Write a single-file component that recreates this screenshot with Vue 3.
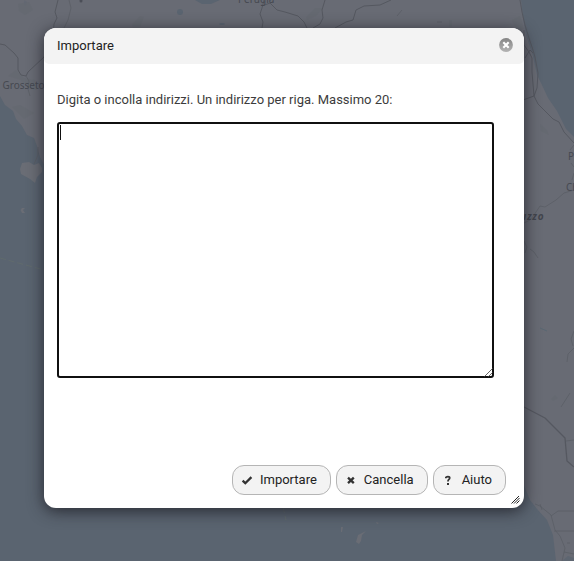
<script setup>
import { ref } from 'vue'

const addresses = ref('')
const buttons = [
  { id: 'import', label: 'Importare' },
  { id: 'cancel', label: 'Cancella' },
  { id: 'help', label: 'Aiuto' },
]
</script>

<template>
  <main class="screen">
    <svg class="map" viewBox="0 0 574 561" width="574" height="561" aria-hidden="true">
      <rect width="574" height="561" fill="#686b74" />
      <g class="water">
        <path d="M0 96 L5 105 L13 111 L16 119 L22 126 L27 135 L34 138 L37 146 L40 157 L46 168 L70 220 L170 330 L330 430 L523 483 L530 500 L537 509 L547 520 L553 535 L556 561 H0Z" />
        <path d="M521 0 H574 V137 L566 129 L557 111 L548 98 L541 83 L537 75 L533 56 L526 35 L523 18Z" />
        <path d="M195 0 L202 4 L211 4 L220 0Z" />
        <ellipse cx="180" cy="12" rx="3" ry="3" />
        <ellipse cx="222" cy="24" rx="3" ry="1" />
        <path d="M24 0 L27 2 L26 6 L24 5Z" opacity=".3" />
        <path d="M562 561 L568 556 L574 558 V561Z" opacity=".7" />
        <path d="M540 328 L547 331" class="stream" />
      </g>
      <g class="land">
        <path d="M22 163 L29 162 L34 165 L39 163 L42 168 L42 172 L37 177 L35 183 L30 179 L21 174 L20 169Z" />
        <path d="M22 208 L25 208 L23 210 L25 213 L22 213 L20.500 210Z" />
        <path d="M356 542 L358 535 L366 531 L362 535 L361 541 L359 544Z" />
        <path d="M341 527 h2 l-1 5 h-1Z M376 522 l3 1 -2 1Z" />
      </g>
      <g class="terrain">
        <path d="M18 4 l11 -2 4 8 -8 5 -6 -4Z M132 25 l8 -9 4 1 -4 10 -4 8Z M8 76 l8 -6 8 8 11 2 2 10 -9 -2 -7 -8Z M12 107 l8 -2 14 8 -10 6Z M512 20 l8 -4 4 12 -6 5Z M540 124 l7 6 2 5 -8 -4Z M306 17 l9 -9 8 0 -7 8 -9 4Z M449 20 h3 v7 h-3Z M551 399 l4 -4 3 3 -5 3Z" />
      </g>
      <g class="roads">
        <path d="M0 44 L5 45 L14 53 L18 58 L18 70 L21 75 L26 76 L28 72 L44 57 L49 44 L53 36 L54 24 L57 18 L55 12 L58 0" />
        <path d="M26 76 L29 81 L28 89 L30 96 M34 164 L38 155 L38 147 M69 0 L71 8 L68 20 L64 28" class="minor" />
        <path d="M264 0 L262 8 L260 14 L263 22 L262 28 M262 6 L270 3 L277 10 L285 12 L298 16 L304 22 L307 28" />
        <path d="M325 0 L322 10 L323 18 L320 24 L313 28 M335 28 L346 22 L353 20 L356 10 L364 6 L380 5 L391 0" />
        <path d="M397 16 L402 10 M437 22 h5" class="minor" />
        <path d="M520 0 L522 12 L525 25 L529 38 L533 50 L535 57 L538 73 L537 88 L534 96 L538 104 L553 119 L559 122 L564 132 L574 143" />
        <path d="M524 30 L524 45 L529 52 L532 58 L532 72 L534 96 L523 100 M525 58 L530 50 L533 53" />
        <path d="M574 190 L564 193 L556 200 L545 207 L540 206 L534 215 L530 220 L524 223 M574 145 L570 150 M571 163 L574 167 M574 173 L572 180 M524 241 L527 247 L525 253" class="minor" />
        <path d="M530 249 L534 252 L538 258" class="minor" />
        <path d="M524 407 L545 418 L565 438 L567 461 L574 467" class="highway" />
        <path d="M574 331 L571 339 L573 346 M574 348 L568 354 L567 362 M561 407 L570 393 M566 441 L574 440" class="minor" />
        <path d="M535 504 L540 506 L551 515 L555 530 L560 536 L565 548 L562 561 M551 516 L558 511 L574 511 M554 531 H574 M564 552 L574 554 M540 504 L542 510 M567 543 h3" class="minor" />
      </g>
      <path class="border-line" d="M0 258 L44 270 M283 507 L286 520" />
      <text class="city" x="2.5" y="88.5">Grosseto</text>
      <text class="city" x="238" y="3">Perugia</text>
      <text class="city" x="568" y="160">Pescara</text>
      <text class="city" x="566" y="191">Chieti</text>
      <text class="region" x="502" y="220" textLength="41.5">Abruzzo</text>
      <circle cx="81" cy="1" r="1.5" fill="#4b4e57" />
    </svg>

    <section class="dialog" role="dialog" aria-labelledby="dialog-title">
      <header class="header">
        <span id="dialog-title">Importare</span>
        <button class="close" aria-label="Chiudi">
          <svg width="14" height="14" viewBox="0 0 14 14">
            <defs>
              <linearGradient id="closeFill" x1="0" y1="0" x2="0" y2="1">
                <stop offset="0" stop-color="#858585" />
                <stop offset="1" stop-color="#b3b3b3" />
              </linearGradient>
            </defs>
            <circle cx="7" cy="7" r="6.9" fill="url(#closeFill)" />
            <path d="M4.3 4.3 L9.7 9.7 M9.7 4.3 L4.3 9.7" stroke="#fff" stroke-width="2.1" />
          </svg>
        </button>
      </header>

      <div class="content">
        <label class="prompt" for="addresses">Digita o incolla indirizzi. Un indirizzo per riga. Massimo 20:</label>
        <div class="field">
          <textarea id="addresses" v-model="addresses"></textarea>
          <span class="caret"></span>
          <svg class="field-grip" width="9" height="9" viewBox="0 0 9 9">
            <path d="M0.5 8.5 L8.5 0.5 M4.5 8.5 L8.5 4.5" />
          </svg>
        </div>
      </div>

      <footer class="actions">
        <button v-for="button in buttons" :key="button.id" class="action">
          <svg class="icon" width="12" height="12" viewBox="0 0 12 12">
            <path v-if="button.id === 'import'" d="M1.6 6.7 L4.3 9.2 L10.4 3.1" class="check" />
            <path v-else-if="button.id === 'cancel'" d="M3 3.6 L8.8 9.2 M8.8 3.6 L3 9.2" class="cross" />
            <g v-else>
              <path d="M3.9 4.3 V3.4 Q4.8 2.7 6 2.7 Q7.7 2.7 7.7 4.1 Q7.7 5.1 6.6 5.7 Q6 6.1 6 7.6" class="question" />
              <rect x="5" y="9" width="2" height="2" class="dot" />
            </g>
          </svg>
          <span class="label">{{ button.label }}</span>
        </button>
      </footer>
      <svg class="dialog-grip" width="9" height="8" viewBox="0 0 9 8">
        <path d="M0.5 7.5 L8 0 M3 7.5 L8.500 2 M5.500 7.5 L8.5 4.5" />
      </svg>
    </section>
  </main>
</template>

<style>
body {
  margin: 0;
  overflow: hidden;
}
</style>

<style scoped>
.screen {
  position: relative;
  box-sizing: border-box;
  width: 574px;
  height: 561px;
  padding: 28px 50px 53px 44px;
  overflow: hidden;
  font-family: Roboto, "Liberation Sans", sans-serif;
  font-size: 13px;
  color: #222;
}
.map {
  position: absolute;
  inset: 0;
}
.water {
  fill: #5a6470;
}
.stream {
  stroke: #596772;
  stroke-width: 1;
}
.land {
  fill: #6a6d75;
}
.terrain {
  fill: #646870;
  opacity: 0.65;
}
.roads {
  fill: none;
  stroke: #555860;
  stroke-width: 1;
  stroke-linejoin: round;
}
.minor {
  stroke: #5b5e66;
  stroke-width: 0.8;
}
.highway {
  stroke-width: 1.3;
}
.border-line {
  fill: none;
  stroke: #626c6c;
  stroke-width: 0.8;
  stroke-dasharray: 6 3;
}
.city {
  font: 10px "Noto Sans", sans-serif;
  fill: #464951;
}
.region {
  font: italic bold 10px "Noto Sans", sans-serif;
  fill: #42454d;
}
.dialog {
  position: relative;
  box-sizing: border-box;
  display: flex;
  flex-direction: column;
  width: 480px;
  height: 480px;
  border-radius: 12px;
  background: #fff;
  box-shadow: 0 3px 16px rgba(25, 25, 32, 0.8);
}
.header {
  display: flex;
  align-items: center;
  justify-content: space-between;
  box-sizing: border-box;
  height: 36px;
  padding: 0 11px 2px 13px;
  border-radius: 12px 12px 5px 5px;
  background: #f3f3f3;
}
.close {
  display: flex;
  padding: 0;
  border: 0;
  background: none;
}
.content {
  flex: 1;
  padding: 28px 30px 0 13px;
}
.prompt {
  display: block;
  height: 30px;
  line-height: 16px;
  color: #3c3c3c;
  white-space: nowrap;
}
.field {
  position: relative;
  width: 437px;
  height: 256px;
}
textarea {
  display: block;
  box-sizing: border-box;
  width: 100%;
  height: 100%;
  border: 2px solid #101010;
  border-radius: 3px;
  outline: none;
  resize: none;
  background: #fff;
}
.caret {
  position: absolute;
  left: 3px;
  top: 3px;
  width: 1px;
  height: 15px;
  background: #111;
}
.field-grip {
  position: absolute;
  right: 1px;
  bottom: 1px;
  fill: none;
  stroke: #555;
  stroke-width: 0.9;
}
.actions {
  display: flex;
  justify-content: flex-end;
  gap: 5px;
  padding: 0 18px 13px 0;
}
.action {
  display: flex;
  align-items: center;
  gap: 7px;
  box-sizing: border-box;
  height: 30px;
  padding: 0 13px 0 8px;
  border: 1px solid #b5b5b5;
  border-radius: 12px;
  background: #f3f3f3;
  color: #222;
  font: inherit;
}
.action:last-child {
  gap: 8px;
}
.label {
  padding-bottom: 2px;
}
.icon {
  fill: none;
  stroke: #333;
}
.check {
  stroke-width: 2.3;
}
.cross {
  stroke-width: 2.3;
}
.question {
  stroke-width: 1.8;
}
.dot {
  fill: #333;
  stroke: none;
}
.dialog-grip {
  position: absolute;
  right: 4px;
  bottom: 4px;
  fill: none;
  stroke: #222;
  stroke-width: 1;
}
</style>
